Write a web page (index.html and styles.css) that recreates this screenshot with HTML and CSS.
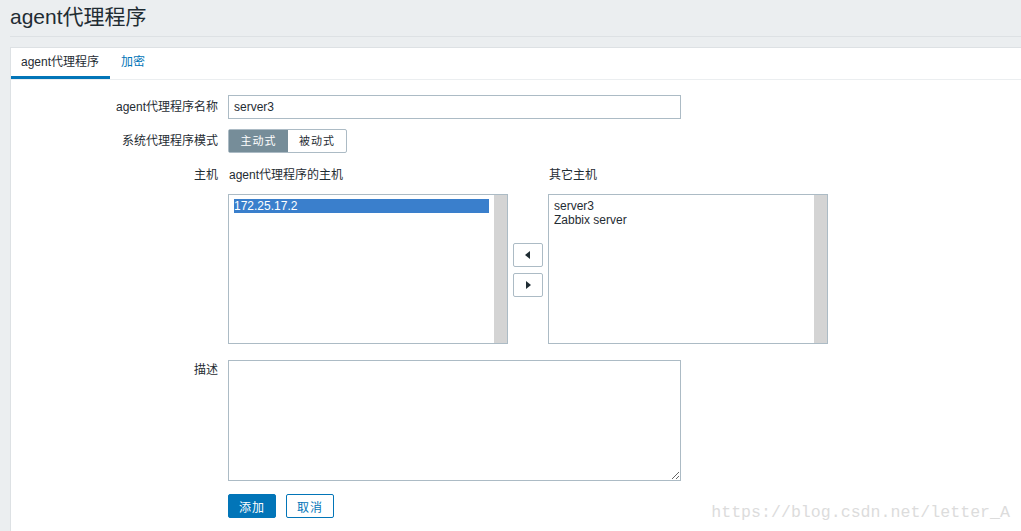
FILE: index.html
```html
<!DOCTYPE html>
<html>
<head>
<meta charset="utf-8">
<link rel="stylesheet" href="styles.css">
</head>
<body>
<header class="page-header"><h1 class="page-title">agent代理程序</h1></header>
<main class="card">
  <nav class="tabs">
    <span class="tab active">agent代理程序</span>
    <span class="tab link">加密</span>
  </nav>
  <form class="form">
    <label class="label">agent代理程序名称</label>
    <div class="field"><input class="text-input" type="text" value="server3"></div>

    <label class="label">系统代理程序模式</label>
    <div class="field">
      <div class="segmented">
        <span class="seg on">主动式</span><span class="seg">被动式</span>
      </div>
    </div>

    <label class="label">主机</label>
    <div class="field hosts">
      <div class="host-col">
        <div class="host-title">agent代理程序的主机</div>
        <div class="listbox">
          <div class="list-items"><div class="item selected">172.25.17.2</div></div>
          <div class="scrollbar"></div>
        </div>
      </div>
      <div class="mover">
        <button type="button" class="arrow-btn"><svg width="6" height="8" viewBox="0 0 6 8"><path d="M5 0 L0 4 L5 8 Z" fill="#1f2c33"/></svg></button>
        <button type="button" class="arrow-btn"><svg width="6" height="8" viewBox="0 0 6 8"><path d="M1 0 L6 4 L1 8 Z" fill="#1f2c33"/></svg></button>
      </div>
      <div class="host-col">
        <div class="host-title">其它主机</div>
        <div class="listbox">
          <div class="list-items"><div class="item">server3</div><div class="item">Zabbix server</div></div>
          <div class="scrollbar"></div>
        </div>
      </div>
    </div>

    <label class="label desc-label">描述</label>
    <div class="field desc-field"><textarea class="textarea"></textarea></div>

    <div class="spacer"></div>
    <div class="field actions">
      <button type="button" class="btn primary">添加</button>
      <button type="button" class="btn alt">取消</button>
    </div>
  </form>
</main>
<div class="watermark">https://blog.csdn.net/letter_A</div>
</body>
</html>
```
FILE: styles.css
```css
* { box-sizing: border-box; }
html, body { margin: 0; padding: 0; }
body {
  background: #ebeef0;
  font-family: "Liberation Sans", Arial, "Noto Sans CJK SC", sans-serif;
  font-size: 12px;
  color: #1f2c33;
  height: 531px;
  overflow: hidden;
  position: relative;
}
.page-header {
  margin-left: 10px;
  height: 37px;
  border-bottom: 1px solid #dde1e4;
  display: flex;
  align-items: center;
}
.page-title {
  margin: 0;
  font-weight: normal;
  font-size: 21px;
  line-height: 24px;
  color: #1f2c33;
  padding-bottom: 2px;
}
.card {
  margin: 10px 0 0 10px;
  background: #fff;
  border-left: 1px solid #dde1e4;
  border-top: 1px solid #dde1e4;
  height: calc(100vh - 47px);
}
.tabs {
  display: flex;
  height: 32px;
  border-bottom: 1px solid #ebeef0;
}
.tab {
  padding: 0 10px;
  line-height: 28px;
  height: 31px;
  font-size: 12px;
}
.tab.active {
  border-bottom: 3px solid #0275b8;
  width: 99px;
}
.tab.link { color: #0275b8; padding-left: 11px; }
.form {
  display: grid;
  grid-template-columns: 207px 1fr;
  column-gap: 10px;
  row-gap: 10px;
  padding-top: 15px;
}
.label {
  text-align: right;
  line-height: 24px;
  white-space: nowrap;
}
.field { display: flex; align-items: flex-start; }
.text-input {
  width: 453px;
  height: 24px;
  border: 1px solid #acbbc5;
  padding: 0 5px;
  font-family: "Liberation Sans", Arial, sans-serif;
  font-size: 12px;
  color: #1f2c33;
  outline: none;
}
.segmented {
  display: flex;
  border: 1px solid #acbbc5;
  border-radius: 2px;
  height: 24px;
}
.seg {
  width: 58px;
  text-align: center;
  line-height: 22px;
  font-size: 11px;
  letter-spacing: 1px;
}
.seg.on { background: #768d99; color: #fff; width: 59px; }
.hosts { align-items: flex-start; }
.host-col { display: flex; flex-direction: column; }
.host-title { line-height: 24px; height: 24px; margin-bottom: 7px; padding-left: 1px; }
.listbox {
  width: 280px;
  height: 150px;
  border: 1px solid #acbbc5;
  display: flex;
  background: #fff;
}
.list-items { flex: 1; padding: 4px 5px; }
.item { line-height: 14px; height: 14px; font-size: 12px; }
.item.selected { background: #3a7fcc; color: #fff; }
.scrollbar { width: 13px; background: #d4d4d4; }
.mover {
  display: flex;
  flex-direction: column;
  gap: 6px;
  margin: 80px 5px 0;
}
.arrow-btn {
  width: 30px;
  height: 24px;
  border: 1px solid #acbbc5;
  border-radius: 2px;
  background: #fff;
  display: flex;
  align-items: center;
  justify-content: center;
  padding: 0;
}
.desc-label { margin-top: 6px; line-height: 20px; }
.desc-field { margin-top: 6px; }
.textarea {
  width: 453px;
  height: 121px;
  border: 1px solid #acbbc5;
  resize: both;
  outline: none;
  margin: 0;
}
.spacer { }
.actions { gap: 10px; margin-top: 3px; }
.btn {
  width: 48px;
  height: 24px;
  border-radius: 2px;
  font-family: "Liberation Sans", "Noto Sans CJK SC", sans-serif;
  font-size: 12px;
  padding: 0;
  letter-spacing: 1px;
}
.btn.primary { background: #0275b8; border: 1px solid #0275b8; color: #fff; }
.btn.alt { background: #fff; border: 1px solid #0275b8; color: #0275b8; }
.watermark {
  position: absolute;
  right: 11px;
  bottom: 9px;
  font-family: "Liberation Mono", monospace;
  font-size: 16.6px;
  color: #dcdcdc;
  white-space: nowrap;
}
```
